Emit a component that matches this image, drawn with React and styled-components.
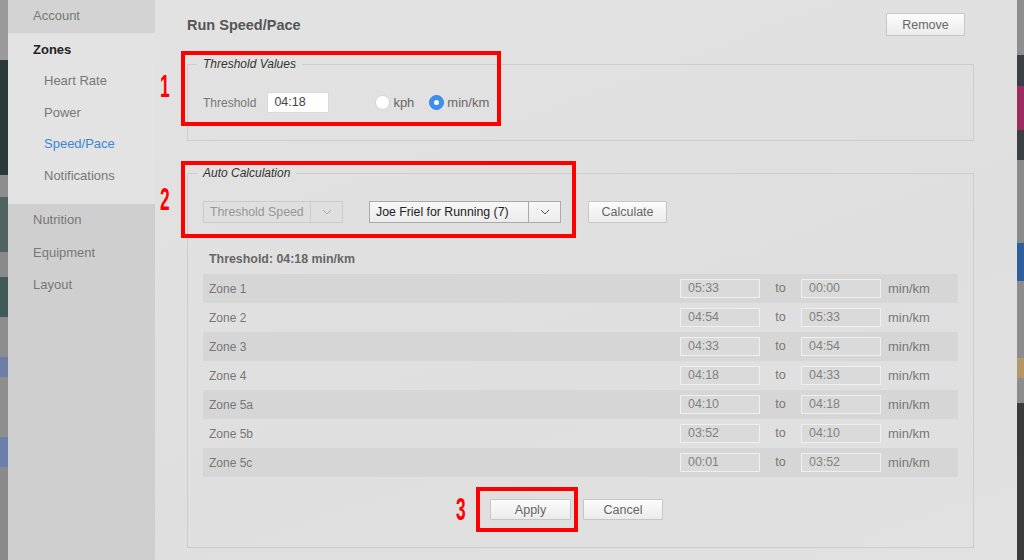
import React from "react";
import styled, { createGlobalStyle } from "styled-components";

const GlobalStyle = createGlobalStyle`
  html, body {
    margin: 0;
    padding: 0;
  }
  body {
    font-family: "Liberation Sans", Arial, sans-serif;
    background: #8c8c8c;
  }
`;

const Screen = styled.div`
  position: relative;
  display: flex;
  width: 1024px;
  height: 560px;
  overflow: hidden;
`;

const Backdrop = styled.div`
  display: flex;
  flex-direction: column;
  width: ${(p) => p.$w}px;
  flex-shrink: 0;
  background: #8e8e8e;
`;

const Band = styled.div`
  flex: 0 0 ${(p) => p.$h}px;
  background: ${(p) => p.$c};
`;

const Sidebar = styled.nav`
  width: 147px;
  flex-shrink: 0;
  display: flex;
  flex-direction: column;
  background: #cfcfcf;
  font-size: 13px;
`;

const NavGroup = styled.div`
  background: ${(p) => p.$bg};
  padding: ${(p) => p.$pad};
`;

const NavItem = styled.div`
  height: ${(p) => p.$h}px;
  line-height: ${(p) => p.$h}px;
  padding-left: ${(p) => (p.$sub ? 36 : 25)}px;
  color: ${(p) => (p.$active ? "#3a86d4" : p.$strong ? "#222" : "#777")};
  font-weight: ${(p) => (p.$strong ? 700 : 400)};
  white-space: nowrap;
`;

const Panel = styled.main`
  width: 862px;
  flex-shrink: 0;
  box-sizing: border-box;
  background: linear-gradient(160deg, #e3e2e2 0%, #e0dfdf 60%, #e2e1e1 100%);
  padding: 13px 43px 0 32px;
  display: flex;
  flex-direction: column;
  color: #777;
`;

const Header = styled.div`
  display: flex;
  justify-content: space-between;
  align-items: center;
  height: 23px;
  margin-bottom: 21px;
  padding-right: 9px;
`;

const Title = styled.h2`
  margin: 0;
  font-size: 14.5px;
  font-weight: 700;
  color: #555;
`;

const Button = styled.button`
  width: ${(p) => p.$w}px;
  height: ${(p) => p.$h || 22}px;
  box-sizing: border-box;
  padding: 0;
  border: 1px solid #c6c6c6;
  border-radius: 1px;
  background: linear-gradient(#fcfcfc, #ebebeb);
  color: #666;
  font-family: "Liberation Sans", Arial, sans-serif;
  font-size: 12.5px;
  flex-shrink: 0;
`;

const Group = styled.fieldset`
  margin: 0 0 ${(p) => p.$mb || 0}px;
  min-width: 0;
  border: 1px solid #cdcdcd;
  padding: 21px 15px 27px;
`;

const Legend = styled.legend`
  font-size: 12px;
  font-style: italic;
  color: #333;
  line-height: 14px;
  padding: 0 6px;
  margin-left: -6px;
`;

const FieldRow = styled.div`
  display: flex;
  align-items: center;
  height: ${(p) => p.$h}px;
`;

const Label = styled.span`
  font-size: 12px;
  color: #777;
  margin-right: ${(p) => p.$mr || 0}px;
`;

const TextInput = styled.div`
  width: 62px;
  height: 21px;
  box-sizing: border-box;
  border: 1px solid #dadada;
  background: #fff;
  padding-left: 6px;
  font-size: 12.5px;
  line-height: 19px;
  color: #444;
`;

const RadioOption = styled.label`
  display: flex;
  align-items: center;
  gap: 3px;
  margin-left: ${(p) => p.$ml}px;
  font-size: 13px;
  color: #666;
`;

const RadioDot = styled.span`
  width: 15px;
  height: 15px;
  box-sizing: border-box;
  border-radius: 50%;
  display: flex;
  align-items: center;
  justify-content: center;
  background: ${(p) => (p.$checked ? "#3d8ef2" : "#fff")};
  border: 1px solid ${(p) => (p.$checked ? "#3584e4" : "#d4d4d4")};

  &::after {
    content: "";
    display: ${(p) => (p.$checked ? "block" : "none")};
    width: 5px;
    height: 5px;
    border-radius: 50%;
    background: #fff;
  }
`;

const Select = styled.div`
  display: flex;
  width: ${(p) => p.$w}px;
  height: 22px;
  box-sizing: border-box;
  margin-right: ${(p) => p.$mr}px;
  border: 1px solid ${(p) => (p.$disabled ? "#cbcbcb" : "#a9a9a9")};
  background: ${(p) => (p.$disabled ? "#dfdfdf" : "linear-gradient(#f7f7f7, #ececec)")};
  color: ${(p) => (p.$disabled ? "#969696" : "#222")};
  font-size: 12.3px;
`;

const SelectText = styled.span`
  flex: 1;
  line-height: 20px;
  padding-left: 6px;
  white-space: nowrap;
`;

const SelectArrow = styled.span`
  width: 31px;
  display: flex;
  align-items: center;
  justify-content: center;
  border-left: 1px solid ${(p) => (p.$disabled ? "#cbcbcb" : "#a9a9a9")};
`;

const Summary = styled.div`
  margin: 28px 0 7px;
  padding-left: 6px;
  line-height: 16px;
  font-size: 12.4px;
  font-weight: 700;
  color: #666;
`;

const ZoneTable = styled.div`
  display: flex;
  flex-direction: column;
`;

const ZoneRow = styled.div`
  display: grid;
  grid-template-columns: 1fr 80px 41px 80px 70px;
  align-items: center;
  height: 29px;
  padding: 0 7px 0 6px;
  background: ${(p) => (p.$shaded ? "#d6d6d6" : "transparent")};
  font-size: 12px;
  color: #777;
`;

const ZoneInput = styled.div`
  height: 19px;
  box-sizing: border-box;
  border: 1px solid #efefef;
  background: #dadada;
  padding-left: 7px;
  line-height: 17px;
  font-size: 12.4px;
  color: #818181;
`;

const To = styled.span`
  text-align: center;
  font-size: 12.5px;
  margin-top: -2px;
`;

const Unit = styled.span`
  padding-left: 7px;
  font-size: 13px;
`;

const Actions = styled.div`
  display: flex;
  justify-content: center;
  gap: 12px;
  margin-top: 22px;
  padding-right: 8px;
`;

const Annotation = styled.div`
  position: absolute;
  left: ${(p) => p.$x}px;
  top: ${(p) => p.$y}px;
  width: ${(p) => p.$w}px;
  height: ${(p) => p.$h}px;
  box-sizing: border-box;
  border: 4px solid #ff0000;
  pointer-events: none;
`;

const Marker = styled.span`
  position: absolute;
  left: ${(p) => p.$x}px;
  top: ${(p) => p.$y}px;
  font-family: "Liberation Sans", Arial, sans-serif;
  font-size: 31px;
  font-weight: 700;
  line-height: 31px;
  color: #ff0000;
  transform: scaleX(0.56);
  transform-origin: left top;
`;

const Chevron = ({ color }) => (
  <svg width="10" height="6" viewBox="0 0 10 6">
    <polyline points="1,1 5,5 9,1" fill="none" stroke={color} strokeWidth="1" />
  </svg>
);

const zones = [
  ["Zone 1", "05:33", "00:00"],
  ["Zone 2", "04:54", "05:33"],
  ["Zone 3", "04:33", "04:54"],
  ["Zone 4", "04:18", "04:33"],
  ["Zone 5a", "04:10", "04:18"],
  ["Zone 5b", "03:52", "04:10"],
  ["Zone 5c", "00:01", "03:52"],
];

const leftBands = [
  [60, "#9a9a9a"], [115, "#2d383b"], [22, "#8d8d8d"], [55, "#4f6462"],
  [25, "#8a8a8a"], [40, "#3f5a58"], [40, "#8c8c8c"], [20, "#6a7ea6"],
  [60, "#8e8e8e"], [30, "#6a80aa"], [93, "#8a8a8a"],
];

const rightBands = [
  [55, "#8e8e8e"], [31, "#3a3f45"], [44, "#9c2c5c"], [30, "#3a3f45"],
  [83, "#8a8a8a"], [38, "#2f5f9a"], [77, "#8c8c8c"], [20, "#b49766"],
  [25, "#8d8d8d"], [157, "#3b3b3b"],
];

export default function App() {
  return (
    <>
      <GlobalStyle />
      <Screen>
        <Backdrop $w={8}>
          {leftBands.map(([h, c], i) => (
            <Band key={i} $h={h} $c={c} />
          ))}
        </Backdrop>

        <Sidebar>
          <NavGroup $bg="#d3d3d3" $pad="0 0 2px">
            <NavItem $h={31}>Account</NavItem>
          </NavGroup>
          <NavGroup $bg="#e3e3e3" $pad="0.5px 0 13px">
            <NavItem $h={31.5} $strong>Zones</NavItem>
            <NavItem $h={31.5} $sub>Heart Rate</NavItem>
            <NavItem $h={31.5} $sub>Power</NavItem>
            <NavItem $h={31.5} $sub $active>Speed/Pace</NavItem>
            <NavItem $h={31.5} $sub>Notifications</NavItem>
          </NavGroup>
          <NavGroup $bg="#cfcfcf" $pad="0">
            <NavItem $h={32.5}>Nutrition</NavItem>
            <NavItem $h={32.5}>Equipment</NavItem>
            <NavItem $h={32.5}>Layout</NavItem>
          </NavGroup>
        </Sidebar>

        <Panel>
          <Header>
            <Title>Run Speed/Pace</Title>
            <Button $w={79} $h={23}>Remove</Button>
          </Header>

          <Group $mb={25}>
            <Legend>Threshold Values</Legend>
            <FieldRow $h={21}>
              <Label $mr={11}>Threshold</Label>
              <TextInput>04:18</TextInput>
              <RadioOption $ml={46}>
                <RadioDot />
                kph
              </RadioOption>
              <RadioOption $ml={15}>
                <RadioDot $checked />
                min/km
              </RadioOption>
            </FieldRow>
          </Group>

          <Group>
            <Legend>Auto Calculation</Legend>
            <FieldRow $h={22}>
              <Select $w={140} $mr={26} $disabled>
                <SelectText>Threshold Speed</SelectText>
                <SelectArrow $disabled>
                  <Chevron color="#a8a8a8" />
                </SelectArrow>
              </Select>
              <Select $w={192} $mr={27}>
                <SelectText>Joe Friel for Running (7)</SelectText>
                <SelectArrow>
                  <Chevron color="#555" />
                </SelectArrow>
              </Select>
              <Button $w={79}>Calculate</Button>
            </FieldRow>

            <Summary>Threshold: 04:18 min/km</Summary>

            <ZoneTable>
              {zones.map(([name, from, to], i) => (
                <ZoneRow key={name} $shaded={i % 2 === 0}>
                  <span>{name}</span>
                  <ZoneInput>{from}</ZoneInput>
                  <To>to</To>
                  <ZoneInput>{to}</ZoneInput>
                  <Unit>min/km</Unit>
                </ZoneRow>
              ))}
            </ZoneTable>

            <Actions>
              <Button $w={81} $h={21}>Apply</Button>
              <Button $w={80} $h={21}>Cancel</Button>
            </Actions>
          </Group>
        </Panel>

        <Backdrop $w={7}>
          {rightBands.map(([h, c], i) => (
            <Band key={i} $h={h} $c={c} />
          ))}
        </Backdrop>

        <Annotation $x={181} $y={51} $w={320} $h={75} />
        <Annotation $x={181} $y={161} $w={395} $h={77} />
        <Annotation $x={476} $y={487} $w={102} $h={45} />
        <Marker $x={160} $y={71}>1</Marker>
        <Marker $x={160} $y={184}>2</Marker>
        <Marker $x={456} $y={494}>3</Marker>
      </Screen>
    </>
  );
}
